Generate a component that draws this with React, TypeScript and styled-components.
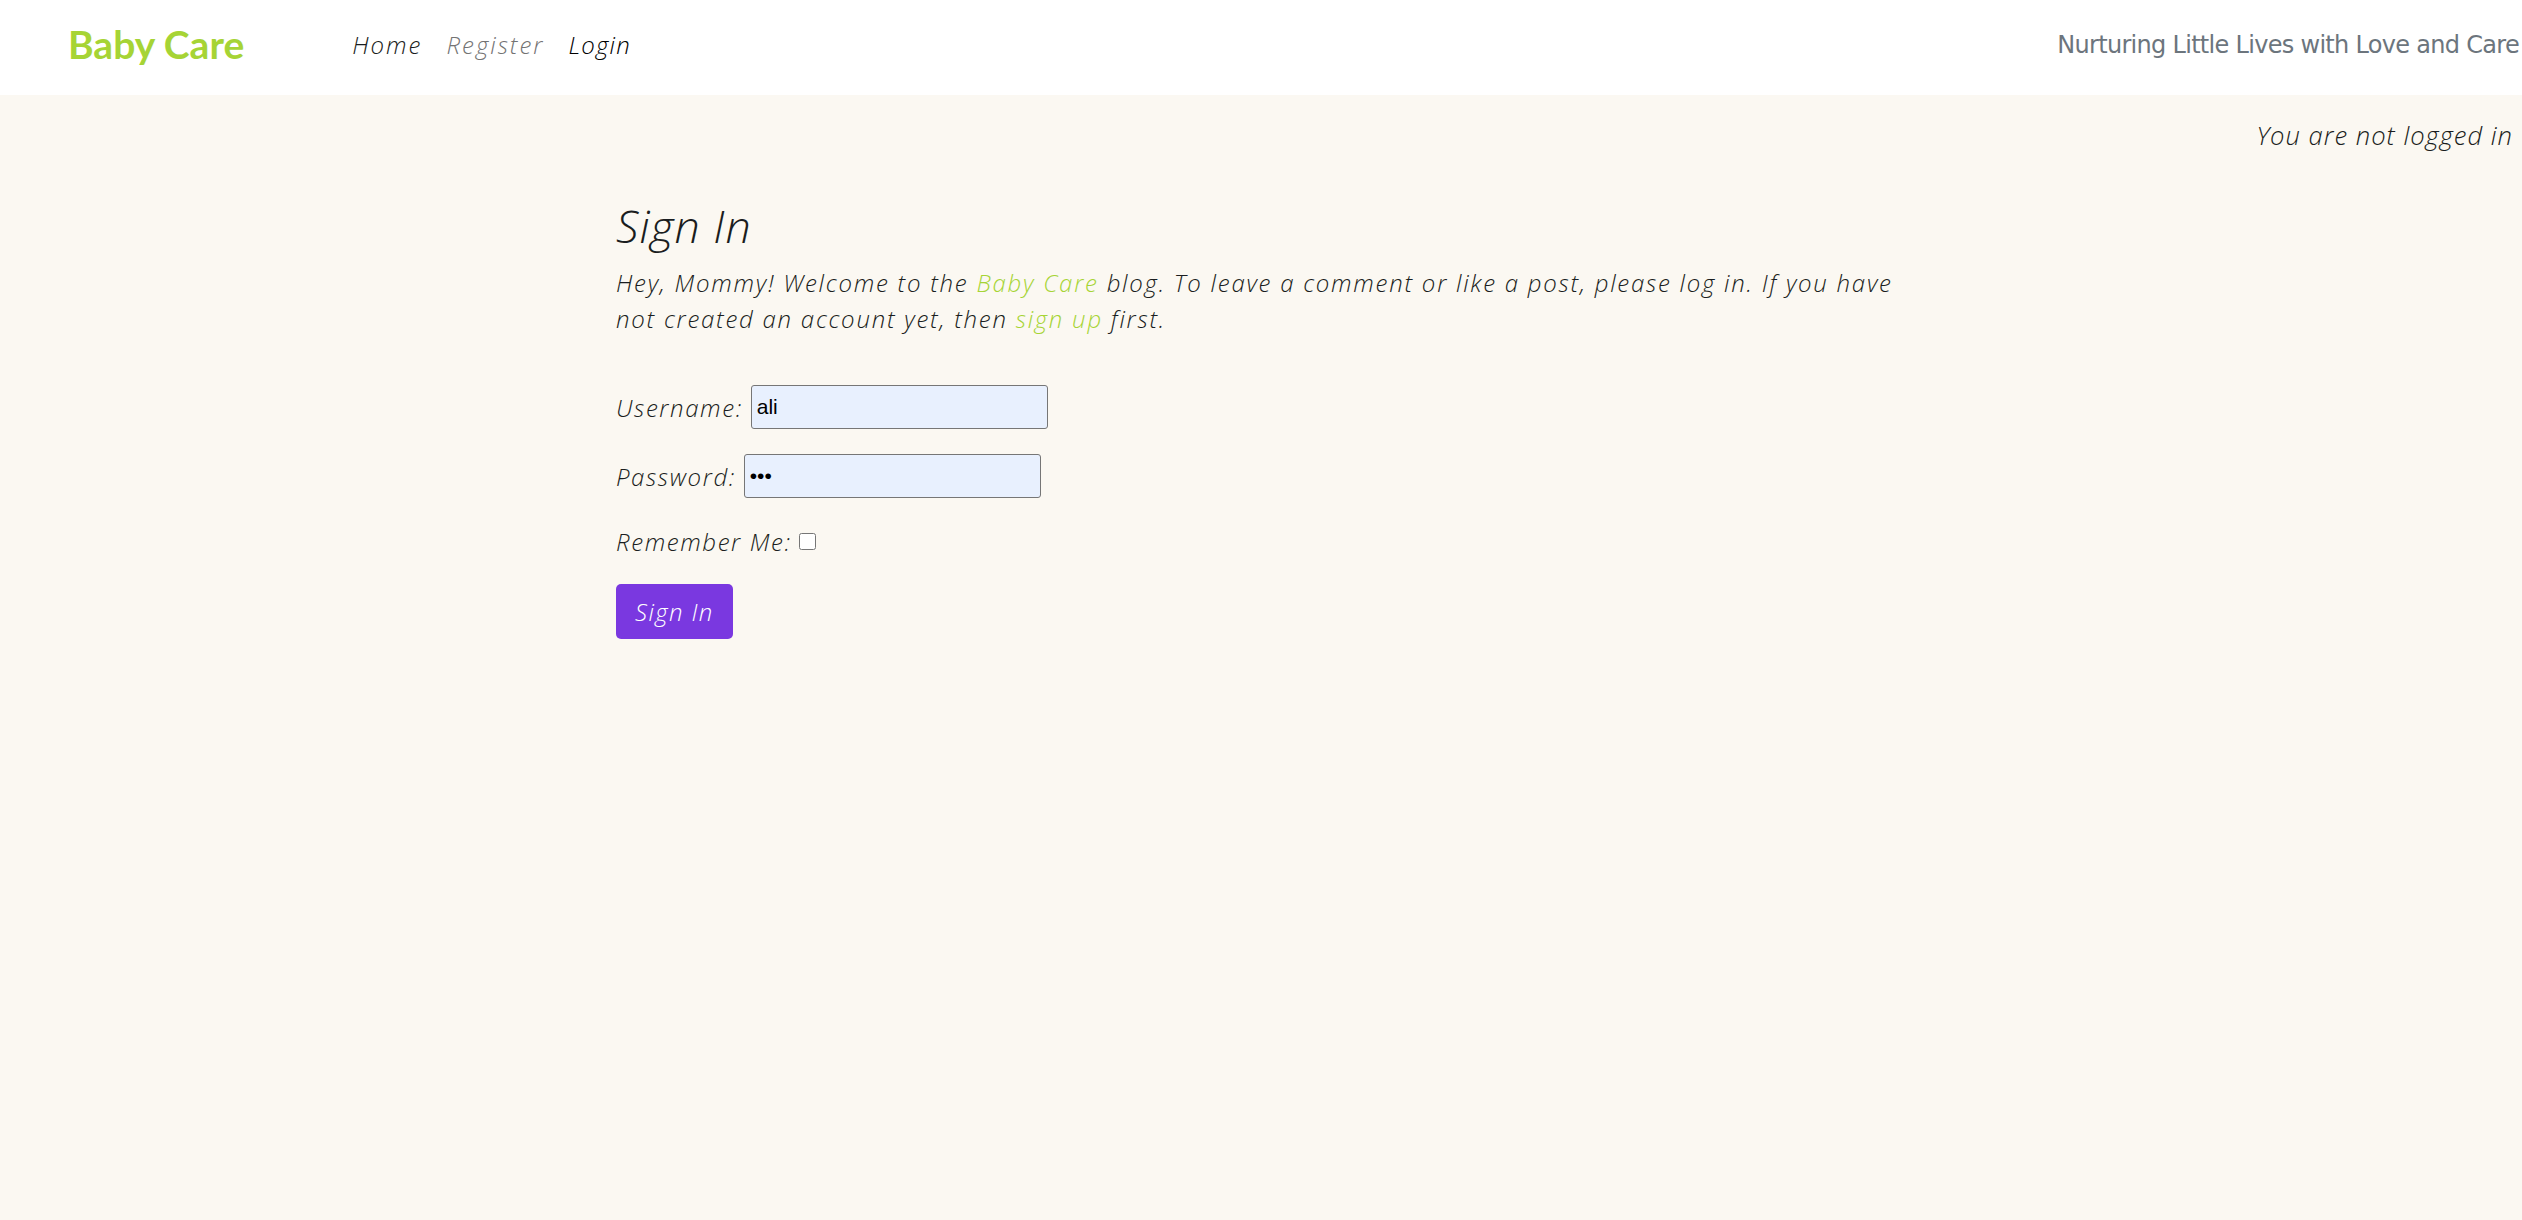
import React from "react";
import styled, { createGlobalStyle } from "styled-components";

const GlobalStyle = createGlobalStyle`
  html, body { margin: 0; padding: 0; }
  body {
    background: #fbf8f2;
    font-family: "Open Sans", "Liberation Sans", sans-serif;
    color: #212529;
  }
  * { box-sizing: border-box; }
`;

const Page = styled.div`
  min-height: 1220px;
  display: flex;
  flex-direction: column;
`;

const NavBar = styled.header`
  height: 95px;
  background: #ffffff;
  display: flex;
  align-items: center;
  padding: 0 3px 6px 68px;
`;

const Brand = styled.a`
  font-family: Lato, "Liberation Sans", sans-serif;
  font-weight: 700;
  font-size: 39px;
  color: #a6d435;
  text-decoration: none;
  line-height: 1;
`;

const NavLinks = styled.nav`
  display: flex;
  gap: 24px;
  margin-left: 108px;
`;

const NavLink = styled.a<{ $tone: "dark" | "muted" | "active" }>`
  font-style: italic;
  font-weight: 300;
  font-size: 24px;
  letter-spacing: ${(p) => (p.$tone === "active" ? "1.2px" : "2px")};
  text-decoration: none;
  color: ${(p) =>
    p.$tone === "muted" ? "#737373" : p.$tone === "active" ? "#000000" : "#1a1d20"};
`;

const Tagline = styled.span`
  margin-left: auto;
  font-family: "DejaVu Sans", sans-serif;
  font-size: 24px;
  letter-spacing: -0.7px;
  color: #6c757d;
`;

const Main = styled.main`
  display: flex;
  flex-direction: column;
`;

const Status = styled.p`
  align-self: flex-end;
  margin: 22px 9px 0 0;
  font-style: italic;
  font-weight: 300;
  font-size: 25.6px;
  letter-spacing: 1px;
  line-height: 38px;
  color: #1a1d20;
`;

const Content = styled.section`
  margin: 44px 0 0 616px;
  width: 1300px;
`;

const Heading = styled.h3`
  margin: 0;
  font-style: italic;
  font-weight: 300;
  font-size: 44.8px;
  letter-spacing: 1px;
  line-height: 54px;
  color: #1a1d20;
`;

const Intro = styled.p`
  margin: 12px 0 0;
  font-style: italic;
  font-weight: 300;
  font-size: 24px;
  letter-spacing: 1.75px;
  line-height: 36px;
  color: #1a1d20;
`;

const Accent = styled.a`
  color: #a6d435;
  text-decoration: none;
`;

const Form = styled.form`
  margin-top: 48px;
  display: flex;
  flex-direction: column;
  align-items: flex-start;
`;

const Field = styled.p<{ $gap: number }>`
  margin: 0 0 ${(p) => p.$gap}px;
  display: flex;
  align-items: center;
  font-style: italic;
  font-weight: 300;
  font-size: 24px;
  letter-spacing: 1.6px;
  color: #1a1d20;
`;

const Label = styled.label`
  margin-right: 8px;
`;

const TextInput = styled.input`
  width: 297px;
  height: 44px;
  padding: 0 5px;
  border: 1px solid #767676;
  border-radius: 3px;
  background: #e8f0fe;
  font-family: "Liberation Sans", Arial, sans-serif;
  font-size: 21px;
  letter-spacing: 0;
  color: #000;
`;

const Check = styled.input`
  width: 17px;
  height: 17px;
  margin: 0;
`;

const SubmitButton = styled.button`
  height: 55px;
  padding: 0 19px;
  border: none;
  border-radius: 5px;
  background: #7a38e0;
  color: #ffffff;
  font-family: "Open Sans", sans-serif;
  font-style: italic;
  font-weight: 300;
  font-size: 24px;
  letter-spacing: 1.4px;
`;

export default function App() {
  return (
    <Page>
      <GlobalStyle />
      <NavBar>
        <Brand href="#">Baby Care</Brand>
        <NavLinks>
          <NavLink href="#" $tone="dark">Home</NavLink>
          <NavLink href="#" $tone="muted">Register</NavLink>
          <NavLink href="#" $tone="active">Login</NavLink>
        </NavLinks>
        <Tagline>Nurturing Little Lives with Love and Care</Tagline>
      </NavBar>
      <Main>
        <Status>You are not logged in</Status>
        <Content>
          <Heading>Sign In</Heading>
          <Intro>
            Hey, Mommy! Welcome to the <Accent href="#">Baby Care</Accent> blog. To leave a
            comment or like a post, please log in. If you have not created an account yet, then{" "}
            <Accent href="#">sign up</Accent> first.
          </Intro>
          <Form onSubmit={(e) => e.preventDefault()}>
            <Field $gap={25}>
              <Label htmlFor="u">Username:</Label>
              <TextInput id="u" type="text" defaultValue="ali" />
            </Field>
            <Field $gap={27}>
              <Label htmlFor="p">Password:</Label>
              <TextInput id="p" type="password" defaultValue="ali" />
            </Field>
            <Field $gap={26}>
              <Label htmlFor="r">Remember Me:</Label>
              <Check id="r" type="checkbox" />
            </Field>
            <SubmitButton type="submit">Sign In</SubmitButton>
          </Form>
        </Content>
      </Main>
    </Page>
  );
}
